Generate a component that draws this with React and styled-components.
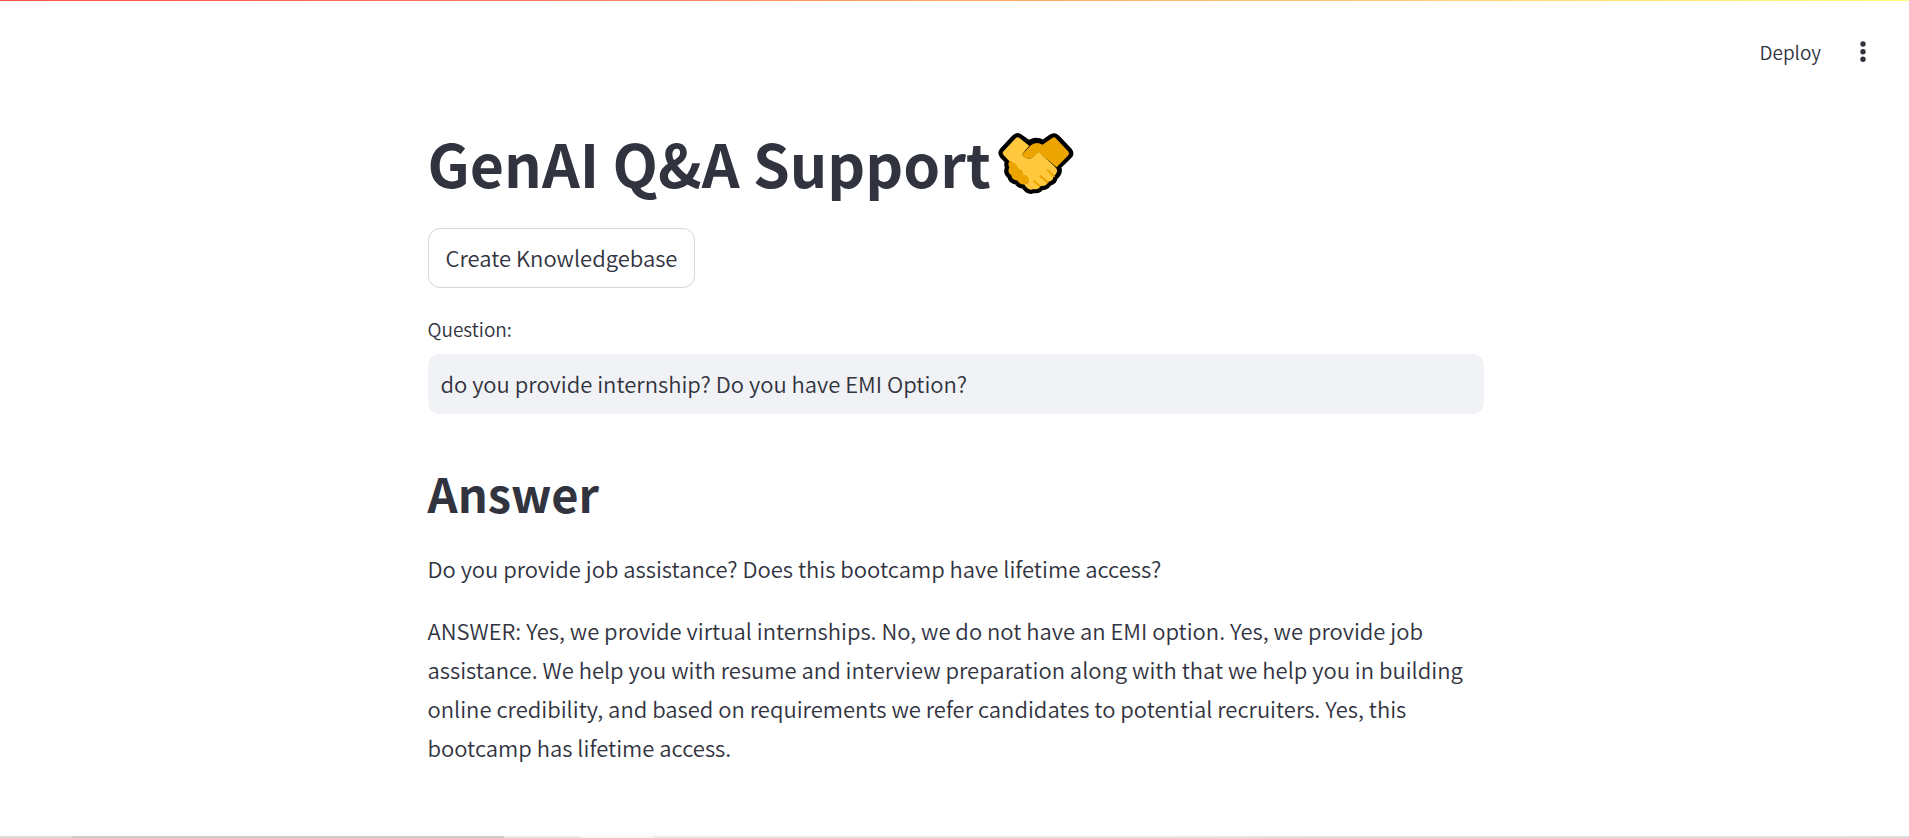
import React, { useState } from "react";
import styled, { createGlobalStyle } from "styled-components";

const GlobalStyle = createGlobalStyle`
  *, *::before, *::after { box-sizing: border-box; }
  body {
    margin: 0;
    background: #ffffff;
    color: #31333f;
    font-family: "Noto Sans CJK SC", "Noto Sans", sans-serif;
    font-size: 22px;
    font-weight: 350;
  }
`;

const Page = styled.div`
  min-height: 100vh;
  display: flex;
  flex-direction: column;
`;

const Decoration = styled.div`
  height: 1px;
  background: linear-gradient(90deg, #ff4b4b, #fffd80);
`;

const Toolbar = styled.header`
  display: flex;
  justify-content: flex-end;
  align-items: center;
  gap: 32px;
  height: 102px;
  padding-right: 36px;
`;

const ToolbarButton = styled.button`
  display: flex;
  align-items: center;
  justify-content: center;
  min-width: 20px;
  padding: 0;
  border: 0;
  background: transparent;
  color: inherit;
  font: inherit;
  font-size: 19px;
  line-height: 32px;
  cursor: pointer;
`;

const Main = styled.main`
  flex: 1;
  width: 100%;
  max-width: 1058px;
  margin: 0 auto;
  padding: 20px 0 24px 2px;
`;

const Title = styled.h1`
  display: flex;
  align-items: center;
  gap: 7px;
  margin: 0 0 25px;
  font-size: 59px;
  font-weight: 700;
  line-height: 80px;
`;

const PrimaryButton = styled.button`
  display: block;
  height: 60px;
  padding: 0 17px 2px;
  border: 1px solid #d6d6d9;
  border-radius: 12px;
  background: #ffffff;
  color: inherit;
  font: inherit;
  cursor: pointer;
`;

const Field = styled.div`
  display: flex;
  flex-direction: column;
  gap: 8px;
  margin-top: 24px;
`;

const FieldLabel = styled.label`
  font-size: 19px;
  line-height: 34px;
`;

const TextInput = styled.input`
  width: 100%;
  height: 60px;
  padding: 0 13px 2px;
  border: 0;
  border-radius: 12px;
  background: #f0f2f6;
  color: inherit;
  font: inherit;
  outline: none;
`;

const AnswerHeading = styled.h2`
  margin: 47px 0 24px;
  font-size: 47px;
  font-weight: 700;
  line-height: 64px;
`;

const Paragraph = styled.p`
  margin: 0 0 23px;
  line-height: 39px;
`;

const BottomEdge = styled.footer`
  display: flex;
  height: 2px;
`;

const Segment = styled.div`
  flex: ${(p) => (p.$width ? `0 0 ${p.$width}px` : "1")};
  background: ${(p) => p.$color};
`;

const Handshake = () => (
  <svg width="76" height="63" viewBox="54 40 227 188" aria-label="handshake" role="img">
    <path
      d="M106 59Q112 53 118 58L146 78Q168 62 188 77L216 58Q222 53 228 60L264 98Q269 104 264 109L229 143Q235 153 230 163Q226 170 220 173Q220 187 203 189Q199 203 181 201Q175 213 160 210Q149 216 139 205L132 197Q118 197 112 185Q96 184 94 170Q80 160 88 146Q82 136 88 127L70 108Q66 103 70 98Z"
      fill="#000"
      stroke="#000"
      strokeWidth="25"
      strokeLinejoin="round"
    />
    <path
      d="M216 58Q222 53 228 60L264 98Q269 104 264 109L229 145L176 101L155 118Q134 123 126 108L150 81Q168 66 187 78Z"
      fill="#eba400"
    />
    <path
      d="M88 127Q82 136 88 146Q80 160 94 170Q96 184 112 185Q118 197 132 197Q150 192 147 174L110 125Z"
      fill="#eba400"
    />
    <path
      d="M106 59Q112 53 118 58L147 81L126 107Q134 122 154 118L176 100L224 144Q236 154 226 167L219 173Q220 187 203 189Q199 203 181 201Q175 213 160 210Q149 216 139 205L132 197Q152 193 143 174Q136 166 129 168Q130 151 114 150Q112 134 98 131Q93 126 88 127L70 108Q66 103 70 98Z"
      fill="#ffc83d"
    />
    <path
      d="M202 154L221 172M180 171L202 190M162 187L178 201"
      stroke="#eba400"
      strokeWidth="6"
      strokeLinecap="round"
    />
  </svg>
);

const MenuDots = () => (
  <svg width="6" height="22" viewBox="0 0 6 22" fill="#31333f" aria-hidden="true">
    <circle cx="3" cy="3" r="2.7" />
    <circle cx="3" cy="10.7" r="2.7" />
    <circle cx="3" cy="18.3" r="2.7" />
  </svg>
);

export default function App() {
  const [question, setQuestion] = useState("do you provide internship? Do you have EMI Option?");
  return (
    <>
      <GlobalStyle />
      <Page>
        <Decoration />
        <Toolbar>
          <ToolbarButton type="button">Deploy</ToolbarButton>
          <ToolbarButton type="button" aria-label="Main menu">
            <MenuDots />
          </ToolbarButton>
        </Toolbar>
        <Main>
          <Title>
            GenAI Q&amp;A Support
            <Handshake />
          </Title>
          <PrimaryButton type="button">Create Knowledgebase</PrimaryButton>
          <Field>
            <FieldLabel htmlFor="question">Question:</FieldLabel>
            <TextInput
              id="question"
              type="text"
              value={question}
              onChange={(e) => setQuestion(e.target.value)}
            />
          </Field>
          <AnswerHeading>Answer</AnswerHeading>
          <Paragraph>Do you provide job assistance? Does this bootcamp have lifetime access?</Paragraph>
          <Paragraph>
            ANSWER: Yes, we provide virtual internships. No, we do not have an EMI option. Yes, we
            provide job assistance. We help you with resume and interview preparation along with
            that we help you in building online credibility, and based on requirements we refer
            candidates to potential recruiters. Yes, this bootcamp has lifetime access.
          </Paragraph>
        </Main>
        <BottomEdge>
          <Segment $width={72} $color="#dcdcdc" />
          <Segment $width={432} $color="#cacaca" />
          <Segment $width={77} $color="#e9e9e9" />
          <Segment $width={73} $color="#f6f6f6" />
          <Segment $color="linear-gradient(90deg, #ebebeb, #dedede)" />
        </BottomEdge>
      </Page>
    </>
  );
}
